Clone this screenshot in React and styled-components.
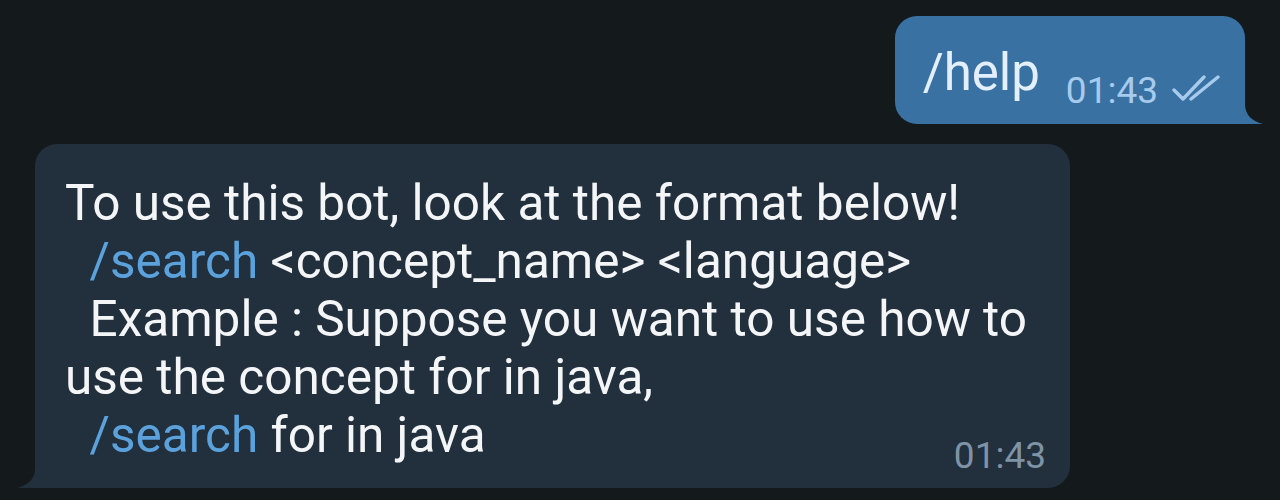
import React from "react";
import styled, { createGlobalStyle } from "styled-components";

const GlobalStyle = createGlobalStyle`
  html, body {
    margin: 0;
    padding: 0;
    background: #14191c;
  }
  body {
    font-family: Roboto, "Noto Sans", "Liberation Sans", sans-serif;
  }
`;

const Chat = styled.div`
  width: 1280px;
  height: 500px;
  box-sizing: border-box;
  padding: 16px 35px 0 35px;
  display: flex;
  flex-direction: column;
  gap: 20px;
  overflow: hidden;
`;

const Row = styled.div`
  display: flex;
  justify-content: ${({ out }) => (out ? "flex-end" : "flex-start")};
`;

const Bubble = styled.div`
  position: relative;
  box-sizing: border-box;
  background: ${({ out }) => (out ? "#3a71a3" : "#222f3c")};
  border-radius: ${({ out }) => (out ? "22px 22px 0 22px" : "22px 22px 22px 0")};
`;

const Tail = styled.svg`
  position: absolute;
  bottom: 0;
  ${({ out }) => (out ? "right: -18px;" : "left: -18px;")}
  width: 18px;
  height: 20px;
  display: block;
`;

const OutBubble = styled(Bubble)`
  display: flex;
  align-items: flex-end;
  height: 108px;
  padding: 0 25px 15px 28px;
`;

const HelpText = styled.span`
  font-size: 51px;
  line-height: 1;
  color: #e3f0fc;
  margin-bottom: 11px;
`;

const OutMeta = styled.span`
  display: flex;
  align-items: flex-end;
  gap: 14px;
  margin-left: 26px;
  font-size: 37px;
  line-height: 1;
  color: #a7cbec;
`;

const InBubble = styled(Bubble)`
  width: 1035px;
  padding: 30px 24px 14px 30px;
  display: flex;
  flex-direction: column;
`;

const Body = styled.div`
  font-size: 49.5px;
  line-height: 58px;
  color: #f3f5f7;
  white-space: pre-wrap;
`;

const Command = styled.span`
  color: #5ba2dc;
`;

const InTime = styled.span`
  align-self: flex-end;
  margin-top: -27px;
  font-size: 37px;
  line-height: 1;
  color: #7f93a6;
`;

const CheckIcon = styled.svg`
  display: block;
  margin-bottom: 5px;
`;

const Checks = () => (
  <CheckIcon width="48" height="30" viewBox="0 0 48 30" fill="none">
    <path
      d="M2 16 L11 25 L32 3"
      stroke="#a7cbec"
      strokeWidth="3.4"
      strokeLinecap="round"
      strokeLinejoin="round"
    />
    <path
      d="M19 25 L46 3"
      stroke="#a7cbec"
      strokeWidth="3.4"
      strokeLinecap="round"
    />
  </CheckIcon>
);

const App = () => {
  return (
    <>
      <GlobalStyle />
      <Chat>
        <Row out>
          <OutBubble out>
            <HelpText>/help</HelpText>
            <OutMeta>
              01:43
              <Checks />
            </OutMeta>
            <Tail out viewBox="0 0 18 20">
              <path d="M0 0 C0 10 6 17 18 20 L0 20 Z" fill="#3a71a3" />
            </Tail>
          </OutBubble>
        </Row>
        <Row>
          <InBubble>
            <Body>
              {"To use this bot, look at the format below!\n  "}
              <Command>/search</Command>
              {" <concept_name> <language>\n  Example : Suppose you want to use how to use the concept for in java,\n  "}
              <Command>/search</Command>
              {" for in java"}
            </Body>
            <InTime>01:43</InTime>
            <Tail viewBox="0 0 18 20">
              <path d="M18 0 C18 10 12 17 0 20 L18 20 Z" fill="#222f3c" />
            </Tail>
          </InBubble>
        </Row>
      </Chat>
    </>
  );
};

export default App;
